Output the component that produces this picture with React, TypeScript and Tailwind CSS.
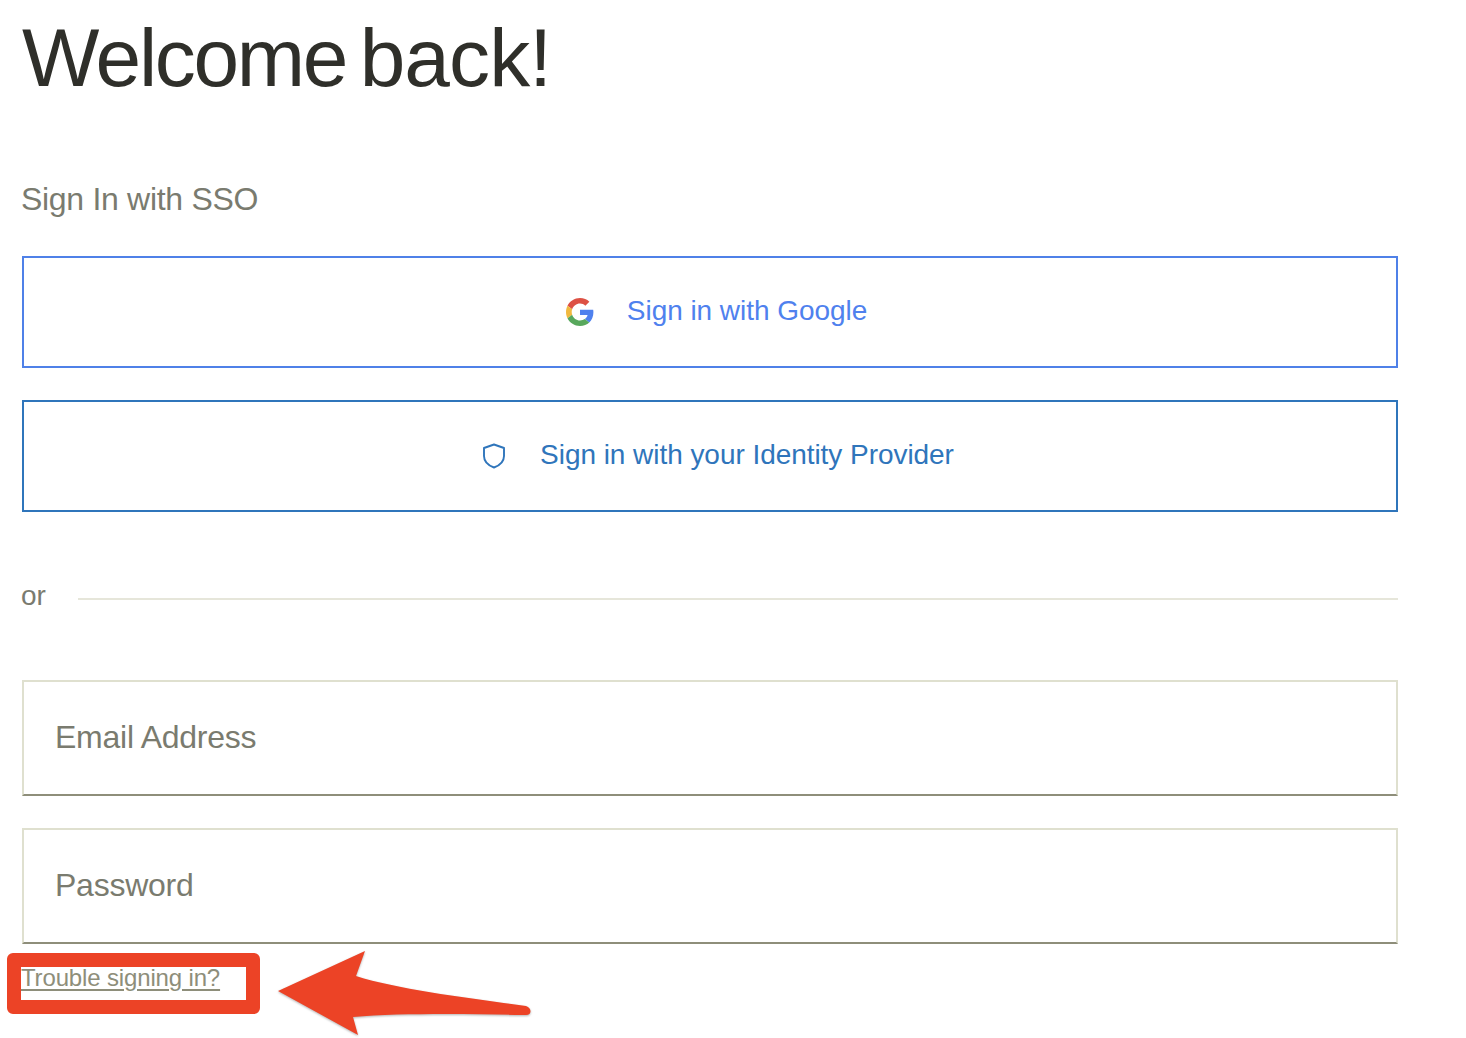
const sans = 'font-["Liberation_Sans",Arial,sans-serif]';

function GoogleIcon() {
  return (
    <svg viewBox="0 0 48 48" className="w-[28px] h-[28px]">
      <path fill="#DD5144" d="M24 9.5c3.54 0 6.71 1.22 9.21 3.6l6.85-6.85C35.9 2.38 30.47 0 24 0 14.62 0 6.51 5.38 2.56 13.22l7.98 6.19C12.43 13.72 17.74 9.5 24 9.5z" />
      <path fill="#4F81EE" d="M46.98 24.55c0-1.57-.15-3.09-.38-4.55H24v9.02h12.94c-.58 2.96-2.26 5.48-4.78 7.18l7.73 6c4.51-4.18 7.09-10.36 7.09-17.65z" />
      <path fill="#F1B93F" d="M10.53 28.59c-.48-1.45-.76-2.99-.76-4.59s.27-3.14.76-4.59l-7.98-6.19C.92 16.46 0 20.12 0 24c0 3.88.92 7.54 2.56 10.78l7.97-6.19z" />
      <path fill="#58A85C" d="M24 48c6.48 0 11.93-2.13 15.89-5.81l-7.73-6c-2.15 1.45-4.92 2.3-8.16 2.3-6.26 0-11.57-4.22-13.47-9.91l-7.98 6.19C6.51 42.62 14.62 48 24 48z" />
    </svg>
  );
}

function ShieldIcon() {
  return (
    <svg viewBox="0 0 24 26" fill="none" stroke="#2f75bb" strokeWidth="1.9" strokeLinejoin="round" className="w-[24px] h-[26px]">
      <path d="M12 1.5 L22 5 V13 C22 18.5 17.5 22.5 12 24.5 C6.5 22.5 2 18.5 2 13 V5 Z" />
    </svg>
  );
}

function SsoButton({ color, gap, icon, label }: { color: string; gap: string; icon: React.ReactNode; label: string }) {
  return (
    <button className={`h-[112px] w-full flex items-center justify-center border-2 bg-white text-[28px] tracking-[-0.05px] ${color} ${gap}`}>
      {icon}
      <span className="mb-[2px]">{label}</span>
    </button>
  );
}

function Field({ label }: { label: string }) {
  return (
    <div className="h-[116px] w-full flex items-center pl-[31px] border-2 border-[#dfe0cf] border-b-[#8e8e7a] text-[32px] tracking-[-0.25px] text-[#7a7b6f]">
      <span className="mb-[2px]">{label}</span>
    </div>
  );
}

export default function App() {
  return (
    <div className={`relative w-[1466px] h-[1038px] overflow-hidden bg-white pl-[22px] ${sans}`}>
      <div className="w-[1376px]">
        <h1 className="h-[114px] pt-[1px] text-[82px] leading-[114px] tracking-[-2.3px] [word-spacing:-7px] text-[#2f2f2a]">
          Welcome <span className="tracking-[-0.9px]">back!</span>
        </h1>
        <p className="mt-[63px] -ml-[1px] h-[45px] text-[32px] leading-[44px] tracking-[-0.3px] text-[#7a7b6f]">Sign In with SSO</p>
        <div className="mt-[34px] flex flex-col gap-[32px]">
          <SsoButton color="border-[#4f81e8] text-[#4f81ee] pl-[13px]" gap="gap-[33px]" icon={<GoogleIcon />} label="Sign in with Google" />
          <SsoButton color="border-[#2f75bb] text-[#2f75bb] pl-[16px]" gap="gap-[34px]" icon={<ShieldIcon />} label="Sign in with your Identity Provider" />
        </div>
        <div className="mt-[68px] h-[32px] flex items-center">
          <span className="-ml-[1px] w-[57px] text-[28px] leading-[32px] text-[#7a7b6f]">or</span>
          <div className="flex-1 h-[2px] mt-[6px] bg-[#e6e6da]" />
        </div>
        <div className="mt-[68px] flex flex-col gap-[32px]">
          <Field label="Email Address" />
          <Field label="Password" />
        </div>
        <a className="relative z-10 mt-[20px] -ml-[1px] block w-fit text-[24px] leading-[28px] tracking-[-0.15px] text-[#8e8e7a] underline underline-offset-[3px]">Trouble signing in?</a>
      </div>

      {/* red annotation drawn on top of the screenshot */}
      <div className="absolute left-[7px] top-[953px] w-[253px] h-[61px] rounded-[6px] border-[14px] border-[#ec4326]" />
      <svg className="absolute left-0 top-[940px] drop-shadow-[0_1px_1px_rgba(0,0,0,0.3)]" width="560" height="98" viewBox="0 940 560 98">
        <path
          fill="#ec4326"
          d="M278 991 L365 951 L356 976 C400 990 470 998 526 1006 C532 1008 532 1015 526 1015 C470 1014 400 1013 353 1017 L358 1035 Z"
        />
      </svg>
    </div>
  );
}
